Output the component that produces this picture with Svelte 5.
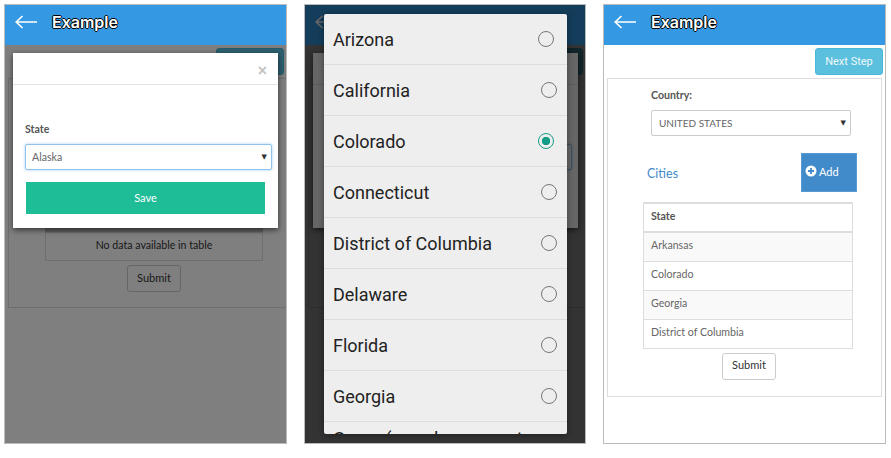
<script lang="ts">
  // Three phone screens: state modal, native picker on top of it, filled-in form.
  const pickerStates = [
    { name: 'Arizona', nudge: true },
    { name: 'California' },
    { name: 'Colorado', selected: true, nudge: true },
    { name: 'Connecticut' },
    { name: 'District of Columbia' },
    { name: 'Delaware' },
    { name: 'Florida' },
    { name: 'Georgia' }
  ];
  const cities = ['Arkansas', 'Colorado', 'Georgia', 'District of Columbia'];
</script>

{#snippet appbar()}
  <header class="appbar">
    <svg class="back" width="22" height="14" viewBox="0 0 22 14" fill="none" stroke="#fff" stroke-width="1.6">
      <path d="M1 7H22M7.5 1 1.2 7l6.3 6" />
    </svg>
    <span class="title">Example</span>
  </header>
{/snippet}

{#snippet nextStep()}
  <div class="toolbar"><button class="next">Next Step</button></div>
{/snippet}

{#snippet caret()}
  <span class="caret">▼</span>
{/snippet}

{#snippet modalScreen()}
  {@render appbar()}
  <div class="body">
    {@render nextStep()}
    <section class="panel empty-panel">
      <div class="grid-head"></div>
      <div class="no-data">No data available in table</div>
      <button class="submit">Submit</button>
    </section>
    <div class="backdrop"></div>
    <div class="modal">
      <div class="modal-head"><span class="close">×</span></div>
      <div class="modal-body">
        <div class="label">State</div>
        <div class="select focus">Alaska {@render caret()}</div>
        <button class="save">Save</button>
      </div>
    </div>
  </div>
{/snippet}

<main class="screens">
  <div class="phone">
    {@render modalScreen()}
  </div>

  <div class="phone middle">
    {@render modalScreen()}
    <div class="dim"></div>
    <div class="picker">
      {#each pickerStates as s}
        <div class="option">
          <span>{s.name}</span>
          <span class="radio" class:nudge={s.nudge} class:on={s.selected}></span>
        </div>
      {/each}
      <div class="option cut">Guam (see also separate</div>
    </div>
  </div>

  <div class="phone">
    {@render appbar()}
    <div class="body">
      {@render nextStep()}
      <section class="panel form-panel">
        <div class="country">
          <div class="label">Country:</div>
          <div class="select upper">UNITED STATES {@render caret()}</div>
        </div>
        <div class="cities-row">
          <span class="cities">Cities</span>
          <button class="add">
            <svg width="12" height="12" viewBox="0 0 12 12">
              <circle cx="6" cy="6" r="5.5" fill="#fff" />
              <path d="M6 3v6M3 6h6" stroke="#428bca" stroke-width="1.8" />
            </svg>
            Add
          </button>
        </div>
        <table class="states">
          <thead><tr><th>State</th></tr></thead>
          <tbody>
            {#each cities as c}
              <tr><td>{c}</td></tr>
            {/each}
          </tbody>
        </table>
        <button class="submit">Submit</button>
      </section>
    </div>
  </div>
</main>

<style>
  :global(body) {
    margin: 0;
    background: #fff;
  }

  .screens {
    display: flex;
    gap: 17px;
    padding: 4px 0 0 4px;
    font-family: 'Lato', 'Open Sans', sans-serif;
    font-size: 10.6px;
    color: #666;
  }

  .phone {
    position: relative;
    width: 281px;
    height: 438px;
    box-sizing: content-box;
    border: 1px solid #bbb;
    overflow: hidden;
    background: #fff;
    flex-shrink: 0;
  }

  .phone.middle {
    width: 280px;
  }

  .appbar {
    height: 40px;
    box-sizing: border-box;
    background: #3498e3;
    display: flex;
    align-items: center;
    gap: 15px;
    padding: 0 0 6px 10px;
    position: relative;
    z-index: 2;
  }

  .back {
    flex-shrink: 0;
  }

  .title {
    font-family: 'Inter', sans-serif;
    font-size: 16px;
    font-weight: 600;
    color: #fff;
    text-shadow: -1px 0 #000, 1px 0 #000, 0 -1px #000, 0 1px #000;
  }

  .body {
    position: relative;
    height: 398px;
  }

  .toolbar {
    display: flex;
    justify-content: flex-end;
    padding: 3px 2px 3px 0;
  }

  .next {
    width: 68px;
    height: 27px;
    border: 1px solid #46b8da;
    border-radius: 3px;
    background: #5bc0de;
    color: #eef8fb;
    font-family: 'Roboto', sans-serif;
    font-size: 11px;
    padding: 0;
  }

  .panel {
    margin: 0 3px;
    border: 1px solid #ddd;
    display: flex;
    flex-direction: column;
  }

  .empty-panel {
    height: 230px;
    margin-right: -14px;
    align-items: center;
    justify-content: flex-end;
    padding-bottom: 15px;
    box-sizing: border-box;
  }

  .grid-head {
    width: 218px;
    height: 4px;
    background: #c4c4c4;
  }

  .no-data {
    width: 218px;
    height: 29px;
    border: 1px solid #ddd;
    box-sizing: border-box;
    display: flex;
    align-items: center;
    justify-content: center;
    padding-bottom: 4px;
    margin-bottom: 4px;
    color: #333;
  }

  .submit {
    width: 54px;
    height: 27px;
    border: 1px solid #ccc;
    border-radius: 3px;
    background: #fff;
    color: #333;
    font-family: inherit;
    font-size: 11px;
    padding: 0 0 3px;
  }

  .backdrop {
    position: absolute;
    inset: 0;
    background: rgba(0, 0, 0, 0.5);
  }

  .modal {
    position: absolute;
    top: 8px;
    left: 8px;
    width: 265px;
    height: 175px;
    background: #fff;
    box-shadow: 0 2px 6px rgba(0, 0, 0, 0.6);
  }

  .modal-head {
    height: 31px;
    border-bottom: 1px solid #e5e5e5;
    display: flex;
    align-items: center;
    justify-content: flex-end;
    padding-right: 11px;
  }

  .close {
    font-family: 'Liberation Sans', sans-serif;
    font-size: 16px;
    font-weight: 700;
    color: #c4c4c4;
    line-height: 1;
    margin-top: 4px;
  }

  .modal-body {
    padding: 38px 6px 0 12px;
  }

  .label {
    font-weight: 700;
    color: #555;
    line-height: 13px;
    margin-bottom: 8px;
  }

  .select {
    position: relative;
    height: 26px;
    border: 1px solid #ccc;
    border-radius: 2px;
    box-sizing: border-box;
    display: flex;
    align-items: center;
    padding-left: 7px;
    color: #666;
    background: #fff;
  }

  .select.focus {
    padding-left: 6px;
    border-color: #8fc3ee;
    box-shadow: 0 0 3px rgba(102, 175, 233, 0.6);
  }

  .select.upper {
    font-size: 10px;
  }

  .caret {
    position: absolute;
    right: 4px;
    top: 8px;
    font-family: 'DejaVu Sans', sans-serif;
    font-size: 7px;
    color: #333;
  }

  .save {
    display: block;
    width: 239px;
    height: 32px;
    margin: 12px 0 0 1px;
    border: none;
    background: #1fbc98;
    color: #fff;
    font-family: inherit;
    font-size: 11px;
    padding: 0 0 2px;
  }

  .dim {
    position: absolute;
    inset: 0;
    z-index: 3;
    background: rgba(0, 0, 0, 0.6);
  }

  .picker {
    position: absolute;
    top: 9px;
    left: 19px;
    width: 243px;
    height: 420px;
    z-index: 4;
    background: #eee;
    border-radius: 2px;
    overflow: hidden;
    box-shadow: 0 1px 6px rgba(0, 0, 0, 0.4);
    font-family: 'Roboto', sans-serif;
    font-size: 18px;
    color: #222;
  }

  .option {
    height: 50px;
    border-bottom: 1px solid #ddd;
    display: flex;
    align-items: center;
    justify-content: space-between;
    padding: 0 10px 0 9px;
    white-space: nowrap;
  }

  .option.cut {
    height: 30px;
    border-bottom: none;
    align-items: flex-start;
    padding-top: 6px;
    line-height: 21px;
  }

  .radio {
    width: 16px;
    height: 16px;
    box-sizing: border-box;
    border: 1.5px solid #777;
    border-radius: 50%;
    flex-shrink: 0;
  }

  .radio.nudge {
    margin-right: 3px;
  }

  .radio.on {
    border-color: #149c88;
    background: radial-gradient(circle, #149c88 0 4px, transparent 4.5px);
  }

  .form-panel {
    height: 319px;
    box-sizing: border-box;
    align-items: flex-start;
  }

  .country {
    width: 200px;
    margin: 10px 0 0 43px;
  }

  .cities-row {
    width: 210px;
    margin: 17px 0 0 39px;
    display: flex;
    justify-content: space-between;
    align-items: center;
  }

  .cities {
    font-size: 12.5px;
    color: #428bca;
    margin-top: 1px;
  }

  .add {
    width: 56px;
    height: 39px;
    border: 1px solid #5a9ad2;
    background: #428bca;
    color: #fff;
    font-family: inherit;
    font-size: 11px;
    display: flex;
    align-items: flex-start;
    gap: 2px;
    padding: 11px 0 0 3px;
  }

  .states {
    width: 210px;
    margin: 10px 0 0 35px;
    border-collapse: collapse;
    border: 1px solid #ddd;
  }

  .states th,
  .states td {
    height: 29px;
    padding: 0 7px 4px;
    text-align: left;
    border-top: 1px solid #ddd;
    box-sizing: border-box;
  }

  .states th {
    color: #555;
    border-top-width: 2px;
    border-bottom: 2px solid #ddd;
  }

  .states tbody tr:nth-child(odd) {
    background: #f9f9f9;
  }

  .form-panel .submit {
    margin: 4px 0 0 114px;
  }
</style>
